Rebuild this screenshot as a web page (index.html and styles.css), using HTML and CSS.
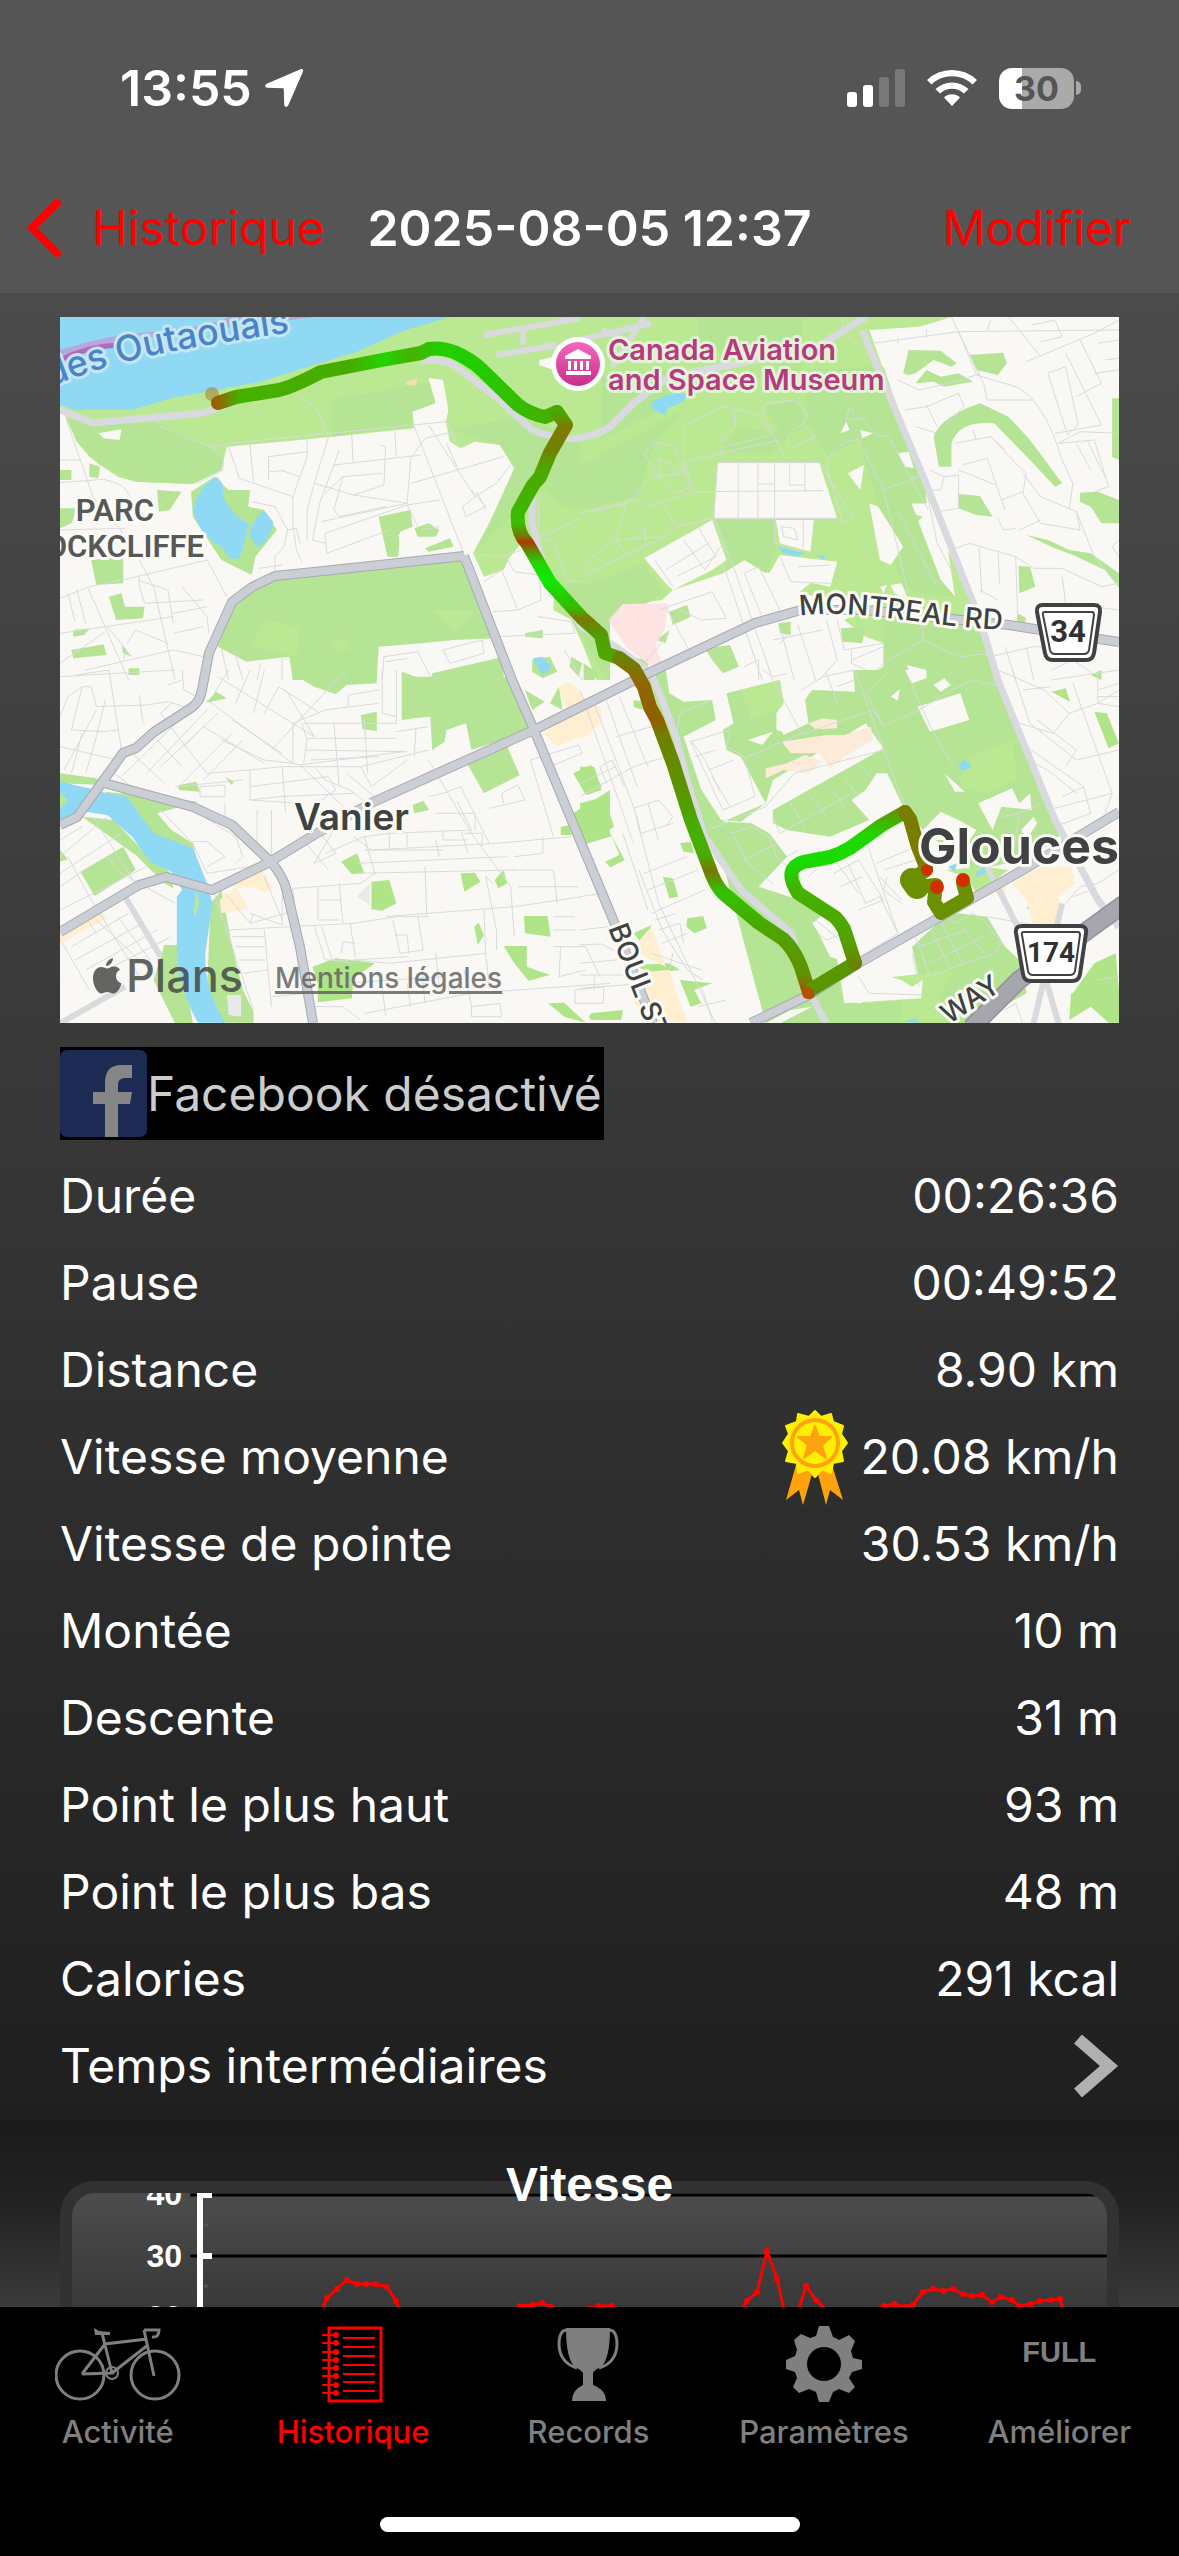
FILE: index.html
```html
<!DOCTYPE html>
<html lang="fr">
<head>
<meta charset="utf-8">
<meta name="viewport" content="width=device-width, initial-scale=1">
<title>Historique</title>
<link rel="stylesheet" href="styles.css">
</head>
<body>
<header class="top">
  <div class="status">
    <div class="status-left">
      <span class="clock">13:55</span>
      <svg width="40" height="40" viewBox="0 0 40 40" aria-hidden="true"><path fill="#fff" d="M36.500 1.200C38.500.4 39.700 1.800 38.900 3.700L24.300 37.300C23.300 39.500 20.300 39.200 20.200 36.700L19.800 21.300C19.800 20.600 19.400 20.200 18.700 20.200L3.300 19.800C.8 19.700.5 16.800 2.700 15.800Z"/></svg>
    </div>
    <div class="status-right">
      <svg width="58" height="38" viewBox="0 0 58 38" aria-hidden="true"><g fill="#fff"><rect y="23" width="10" height="15" rx="3"/><rect x="16" y="16" width="10" height="22" rx="3"/></g><g fill="#787878"><rect x="32" y="8" width="10" height="30" rx="3"/><rect x="48" width="10" height="38" rx="3"/></g></svg>
      <svg class="wifi" width="50" height="38" viewBox="0 0 50 38" aria-hidden="true"><path fill="#fff" d="M25 37L33 28.500A11.500 11.500 0 0 0 17 28.500ZM37 24.500A17.500 17.500 0 0 0 13 24.500L8.500 20A24 24 0 0 1 41.500 20ZM45.500 15.500A29.500 29.500 0 0 0 4.500 15.500L0 11A36 36 0 0 1 50 11Z"/></svg>
      <div class="battery"><div class="cell">30</div><div class="nub"></div></div>
    </div>
  </div>
  <nav class="nav">
    <a class="back" href="#historique"><svg width="36" height="60" viewBox="0 0 36 60" aria-hidden="true"><path d="M31 5L6 30L31 55" fill="none" stroke="#f00" stroke-width="8" stroke-linecap="round" stroke-linejoin="round"/></svg>Historique</a>
    <h1>2025-08-05 12:37</h1>
    <button class="edit" type="button">Modifier</button>
  </nav>
</header>

<main class="page">
  <div class="details">
  <div class="map">
    <svg class="map-art" viewBox="0 0 1059 706" role="img" aria-label="Parcours">
      <defs>
        <linearGradient id="r1" gradientUnits="userSpaceOnUse" x1="158" y1="0" x2="506" y2="0"><stop offset="0" stop-color="#966300"/><stop offset=".06" stop-color="#45b000"/><stop offset=".38" stop-color="#48ac00"/><stop offset=".48" stop-color="#22d400"/><stop offset=".56" stop-color="#48b000"/><stop offset=".63" stop-color="#25cc00"/><stop offset=".75" stop-color="#22cc00"/><stop offset="1" stop-color="#4fa800"/></linearGradient>
        <linearGradient id="r2" gradientUnits="userSpaceOnUse" x1="0" y1="95" x2="0" y2="341"><stop offset="0" stop-color="#48a800"/><stop offset=".06" stop-color="#7d7a00"/><stop offset=".16" stop-color="#708200"/><stop offset=".22" stop-color="#50a400"/><stop offset=".45" stop-color="#38be00"/><stop offset=".5" stop-color="#708000"/><stop offset=".53" stop-color="#ad3a00"/><stop offset=".56" stop-color="#688000"/><stop offset=".61" stop-color="#28d000"/><stop offset=".68" stop-color="#0dec00"/><stop offset=".8" stop-color="#38b800"/><stop offset=".84" stop-color="#7a7800"/><stop offset=".91" stop-color="#4f9f00"/><stop offset="1" stop-color="#4fa800"/></linearGradient>
        <linearGradient id="r3" gradientUnits="userSpaceOnUse" x1="0" y1="340" x2="0" y2="675"><stop offset="0" stop-color="#6a8400"/><stop offset=".07" stop-color="#8f6800"/><stop offset=".19" stop-color="#8f6000"/><stop offset=".24" stop-color="#708000"/><stop offset=".4" stop-color="#5a9500"/><stop offset=".52" stop-color="#45b000"/><stop offset=".59" stop-color="#4aac00"/><stop offset=".64" stop-color="#787800"/><stop offset=".7" stop-color="#30c400"/><stop offset=".8" stop-color="#4aa800"/><stop offset=".95" stop-color="#629000"/><stop offset="1" stop-color="#a85000"/></linearGradient>
        <linearGradient id="r4" gradientUnits="userSpaceOnUse" x1="0" y1="650" x2="0" y2="495"><stop offset="0" stop-color="#6f7d00"/><stop offset=".15" stop-color="#55a000"/><stop offset=".5" stop-color="#42b400"/><stop offset=".68" stop-color="#18dc00"/><stop offset=".85" stop-color="#22d600"/><stop offset="1" stop-color="#5a9800"/></linearGradient>
        <linearGradient id="pin" x1="0" y1="0" x2="0" y2="1"><stop offset="0" stop-color="#f566bd"/><stop offset="1" stop-color="#c92d8b"/></linearGradient>
        <path id="river-line" d="M-10 70C70 38 130 30 260 11"/>
        <path id="montreal-line" d="M740 299C800 290 870 312 970 314"/>
        <path id="boul-line" d="M548 611L608 765"/>
        <path id="way-line" d="M790 772L942 673"/>
      </defs>
      <rect width="1059" height="706" fill="#f9f8f4"/>

      <!-- north-west -->
      <g class="area" transform="translate(-10 -7) scale(.357143 .333333)">
        <path class="lime" d="M28 280L1110 21H1568V1110H1530L1490 1000L1460 930L1410 900V840L1345 740L1320 700L1285 745L1270 780L1215 800L1185 730L1230 640L1260 580L1300 475L1260 405L1190 395L1150 415L1120 395L1108 335L1115 300L1100 210L1060 205L1080 270L1055 295L1015 305L1020 355L700 390L495 410L480 480L400 522L240 515L190 500L140 465L110 440L75 395L45 325L28 290Z"/>
        <path class="leaf" d="M50 330L300 335L450 412L485 445L480 480L400 522L240 515L140 465L75 395ZM790 270L1060 215L1080 280L1015 305L1020 350L790 380ZM1310 320L1568 420V590L1440 590L1380 540L1300 610L1185 730L1230 640L1300 475L1260 405L1120 360ZM1400 840L1568 790V1110L1530 1060L1460 930Z"/>
        <path class="leaf" d="M470 1010L515 880L565 830L640 797L1160 745L1200 860L1250 985L1130 990L1040 1000L920 1010L915 1110H680L670 1040L550 1055ZM115 750L205 740V820L130 825ZM165 860L200 850L210 890L265 890L260 925L185 930ZM65 960L112 955L95 975L65 980ZM60 1020L150 1003L158 1035L65 1045ZM300 540L368 545L335 600L305 605ZM28 595L75 595L60 640L28 655ZM28 480H60V510H28ZM110 460L140 470L135 505L110 500ZM920 620L1010 600L1015 650L980 665L975 740H945ZM1020 655L1060 640L1090 660L1080 680H1030ZM1050 715L1120 685L1130 710L1060 725ZM395 545L460 500L500 540L560 540L555 590L600 600L635 660L575 740L565 795L480 750L400 620ZM1350 1050L1400 1040L1420 1085L1380 1105L1350 1085ZM1330 970L1380 960V985L1330 980ZM1460 1040L1490 1060L1480 1100L1455 1070ZM200 1005L230 1040L205 1030ZM220 1075H250V1095H220ZM985 1085L1050 1110H985ZM1070 1090L1270 1040V1110H1070Z"/>
        <path class="lime" d="M600 930L700 950L690 1040L560 1010ZM790 990L835 985V1022L795 1022ZM1070 900L1190 900L1130 965Z"/>
        <path class="water" d="M28 21H1120L990 62L860 125L700 178L590 215L440 245L340 265L230 300L70 300L28 285ZM400 600Q415 530 465 500Q490 515 485 560Q510 620 558 640Q545 700 530 745Q500 755 485 715Q420 680 400 600ZM558 680Q570 620 600 602L625 635Q620 680 585 712ZM1352 1045L1380 1040L1405 1070L1380 1097Z"/>
        <path fill="#b7a8da" d="M28 120Q150 75 290 65T500 21H700L740 21L330 75Q150 95 28 160Z"/><path d="M30 150Q100 110 190 105" fill="none" stroke="#b06ac0" stroke-width="5"/>
        <path fill="#f9f8f4" d="M135 370L200 358L195 390L150 385ZM975 675L1010 655L1020 715L985 725ZM1370 150L1410 140V180L1370 165ZM1060 205L1100 210L1115 300L1108 335L1020 355L1015 305L1080 280Z"/>
        <path fill="#dbe7f5" d="M1495 240L1540 230L1545 260L1510 298L1490 270Z"/><path fill="#f0ddb0" d="M995 215L1030 205L1025 225L1000 228Z"/>
        <path class="lane wide" d="M1215 75L1510 20M1250 135L1420 105M1325 50V105"/>
        <path class="lane" d="M28 450H85M45 325L120 560L220 690L290 830L350 1110M28 518L150 508Q210 520 225 560M690 250L750 300L780 380L740 520L720 600V690M300 330L310 350L450 412L485 445V480L410 522M450 412L500 400L1110 335L1140 400M500 410L530 505L680 560M560 405L570 515M612 510V440L720 425M720 390V440L680 560V640L690 720L705 755M615 485L650 482L700 500M845 375L848 455M965 362L970 440M795 465L1040 435M740 520L850 555L935 525L940 410L925 405M770 550L820 500L930 490M810 420L755 580L735 690L770 700M850 555L1000 580L760 635M1000 580L1010 445L1050 385L1130 365M1020 350L1160 735M1060 345L1190 560L1250 520L1290 465M1010 520L1270 440M1000 585L1090 570M820 500L795 600L810 620L940 590M770 670L1000 585L1030 650M770 670L775 730L950 660M665 660L690 655L700 700M565 575L630 590L665 660L655 710L630 740V785M585 775L650 765M1190 560L1155 590L1165 620L1220 590L1180 540M1110 400L1140 470M1195 545L1220 595M1040 660L1090 650M1185 735L1270 738L1320 720M1280 745L1300 785L1370 795L1375 870L1310 900L1265 780L1215 815M1240 905L1310 900M1365 530L1370 680L1568 590M1370 680L1410 700L1450 810L1500 820L1568 750M28 660L210 655M205 810L440 750L495 860M28 865L110 830L200 810M50 850L70 935M75 840L100 940M105 830L150 940L220 1110M250 795V830L265 880L430 870M245 810L330 840L345 940M28 970L345 920M345 910L440 890M370 830L385 850L440 920L445 970M160 950L215 1020L205 1050M215 1000L240 960L330 1000M155 965L28 1060M345 970L430 950M100 1080L345 1020L430 1040M28 1100L350 1080M515 1020L540 1110M480 1015L500 1110M590 1060L580 1110M650 1040V1110M930 1110L935 1040L1030 1025L1070 1110M940 1055L1000 1045M1100 1020L1210 990L1215 1030L1120 1060ZM1365 920L1460 935L1470 970L1250 980M1440 1020L1490 1110"/>
      </g>

      <!-- north-east -->
      <g class="area" transform="translate(520 -7) scale(.357143 .333333)">
        <path class="lime" d="M0 21H1040L950 50L810 60L850 180L900 330L965 500L970 580L930 580L880 545L900 600L960 620L920 660L960 750L1010 810L1050 860L1030 720L1110 890L1130 960L1150 1030L1170 1110H790L850 1070L850 1000L800 980L740 930L850 870H720L610 850L650 815L700 830L720 755L560 735L530 790L460 750L400 790L260 840L230 870L100 890L80 940L0 880Z"/>
        <path class="leaf" d="M0 470L150 380L290 300L210 400L160 560L0 600ZM60 190L300 180L240 290L60 390ZM330 21H620V190L330 100ZM620 180L850 170L900 330L965 500L970 580L930 580L850 540L780 390L690 440L640 340L530 430L400 420L440 350L560 370L520 290L600 270L640 330ZM380 630H540L550 715L520 790L460 750L400 790L420 750ZM0 830L180 760L240 850L80 940L0 880ZM780 390L860 390L1010 810L1050 860L960 850L900 830ZM850 930L1120 950L1170 1110H790L850 1070Z"/>
        <path class="leaf" d="M905 190L920 120L1010 122L1055 160L1040 170L990 150L940 190L920 195ZM940 220L970 180L1010 200L1060 190L1100 215L1020 230L990 215ZM1090 135L1185 128L1195 160L1170 195L1110 180ZM990 380Q1010 320 1120 280L1200 320L1260 390L1350 520L1330 530L1260 450L1160 340Q1060 330 1040 400V470H1005ZM1058 552L1120 558L1155 620L1110 615L1060 595ZM1490 265H1509V450L1490 440ZM1400 548L1450 545L1509 570V640L1460 640L1430 590L1400 575ZM1250 675L1310 690L1370 720L1430 730L1509 790V835L1470 780L1380 735L1320 710ZM1228 768L1260 770L1275 830L1230 850ZM1225 910L1250 925L1245 940H1222ZM250 905L300 885L310 920L260 945ZM215 990L250 960L240 1000ZM555 940L590 935V975L560 970ZM730 955L800 950L790 1000L735 995ZM350 1015L420 1005L445 1070L400 1090L370 1050ZM140 1040L190 1050V1085L150 1080ZM600 770H640V800H600ZM10 1060L50 1090L40 1110H10Z"/>
        <path fill="#f9f8f4" d="M385 458H670L720 625H375ZM180 745L370 630L410 750L370 780L260 840L240 820ZM548 630H655L645 725L560 700ZM810 580L835 590L905 710L870 765L840 750ZM750 490L795 465L785 540ZM730 370L745 335L755 360ZM785 360L820 370L790 385ZM890 430L920 425L935 475L910 470ZM840 830L860 825L850 850ZM870 825L900 820L920 870L880 850ZM560 740L720 755L700 830L610 810ZM915 1065L970 1080L960 1110H930Z"/>
        <path fill="#fde3e1" d="M80 930L120 882L245 880L240 950L210 1010L230 1060L200 1070L130 1010Z"/>
        <path class="water" d="M200 280Q230 250 300 250L290 275L245 295L240 315L205 300ZM555 710L630 730L610 740L570 730ZM655 732L692 740L680 748Z"/>
        <path class="lane wide" d="M0 90L200 40M90 170L180 21M60 60L130 90"/>
        <path class="lane" d="M730 21Q740 90 790 105H820M375 625L385 458H670L765 620L735 635L690 470Q700 400 780 388M443 460V625M498 460V625M545 460V625M587 460V525H630M630 460V545M498 522H545M325 545L680 542M375 625H720M375 625L430 770L540 1110M290 455L320 545L200 590L150 570L0 610M290 455V350L400 290L470 305L500 320L535 375L390 415L400 440M430 300L435 350L390 395M510 310L570 440M510 310L520 280L600 270L635 310L625 345Q580 360 580 400L590 415L660 378L625 345M180 430L210 395L265 410L310 530L270 550L225 510L180 430M290 455L560 390M0 800L240 680L100 690L0 770M240 680L270 650L375 625M35 605L130 580L100 690L135 740M130 580L200 500L300 490L220 445L225 510M235 590L270 650M180 650L185 710M745 330L755 290L770 310M745 330L790 325L830 375L865 380L975 600M780 390L850 540L920 850M850 540L970 490M890 600L960 750L1000 830M240 780L360 700M210 750L260 830M270 800L380 740M290 690L350 780L400 700M330 650L380 740M545 630V700L620 720M565 650L600 655L610 690L570 680ZM625 630V715M820 100L1060 65L1509 60M890 85V105M970 60V85M1040 21L1130 220L1140 270L1270 270M1140 60L1150 30M1060 65L1110 195L1220 230Q1300 270 1350 450M1200 21L1290 140M1250 155L1440 70L1509 30M1265 45L1330 30L1350 80L1290 95M1310 190L1360 170L1395 345L1365 375ZM1400 90L1460 220L1390 260M1360 130L1460 345L1330 370M1450 100L1509 90M1470 150L1509 145M1440 190L1509 180M890 210L950 240L1070 210L1120 190M910 300L970 290L1060 250L1075 290L1020 350M970 285L1000 350M940 350L1000 370M1050 400L1150 380L1220 460L1250 490L1240 550L1290 640L1400 660M1100 360L1110 390M1150 380L1190 420M1070 465L1140 445L1190 600M1060 480L1165 525M980 480L1020 500L1010 540L970 540L1000 700L1050 800M1020 500L1060 495L1060 595L1000 605M1170 625L1185 660L1220 655M1240 490L1290 560L1390 605L1440 740L1509 830M1180 570L1240 545M1390 605L1400 660M1340 400L1440 390L1480 530L1440 545M1390 400L1430 480M1420 390L1470 500M1350 450L1380 520L1370 600M1340 400L1400 365L1509 370M1230 660L1290 630M1040 720L1090 700L1220 740L1270 775L1350 775L1460 830L1509 820M1118 715L1125 850M1170 720L1175 820M1220 740L1225 910M1120 840L1170 870M1350 800L1360 880L1509 900M1060 770L1090 840L1090 900M1509 690L1490 710L1509 740M400 760L510 1110M460 790L500 770L560 900M460 790L510 920M560 740L590 815L700 820M610 770L700 765M370 845L410 925L340 930L280 900M370 845L220 900M240 890L310 1030M610 945L660 1110M560 950L600 1110M690 930L720 1050L670 1110M540 990L680 960M560 1000L580 980M720 930L740 1020L850 1000M760 1050L850 1010M760 1020V1060L800 1080M960 850V990L1060 1040L1150 1030M960 990L850 1060L800 1110M460 1070L500 1050L500 1110M1190 1010L1220 1110M1250 1010L1270 1110M1150 1040L1270 1010L1450 1020M1320 1080L1380 1050L1450 1100M250 970L180 1060"/>
      </g>

      <!-- south-west -->
      <g class="area" transform="translate(-10 353) scale(.357143 .333333)">
        <path class="leaf" d="M680 0H915V40L830 45L800 73L740 50L700 25L680 30ZM985 20H1280L1350 180L1180 240L1165 160L1110 180L1105 215L1070 240L1065 140L1020 145L985 150ZM1170 285L1280 230L1315 315L1215 370ZM440 95L465 65L495 85L440 98ZM870 135L915 125L915 183L875 178ZM28 310L130 325L150 345L28 340ZM155 365L320 385L415 395L300 430L340 480L400 520L410 560L300 500ZM360 345L410 335L420 365L360 360ZM490 320L515 335L508 345ZM90 440L180 450L270 555L340 610L345 655L320 640L240 555ZM85 605L205 530L240 600L125 678ZM28 540L50 568L28 575ZM1015 405L1045 392L1062 420L1020 430ZM320 825H360L400 1060H350L290 930ZM450 700L480 660L510 830L540 960L570 1025V1058H480L440 950ZM1330 60L1385 95L1350 120ZM1400 100L1425 50L1435 120Z"/>
        <path class="green" d="M815 575L860 550L880 610L845 612ZM900 635L950 630L970 700L930 722L900 718ZM1150 610L1190 608L1205 635L1160 665ZM1245 630L1270 600L1280 640L1255 655ZM1327 738H1393L1402 800L1330 790ZM1270 828H1335V890L1400 915L1340 932L1300 880ZM1188 770L1200 758L1215 795L1198 825ZM1465 310L1515 285L1545 350L1500 375ZM1465 430L1568 360V500L1500 522ZM1430 470L1455 465L1460 495L1430 495ZM735 890L800 865L910 880L850 925L845 985L750 997L750 940ZM1395 1000L1440 998L1500 1058L1440 1040ZM1510 1035L1568 1025V1050L1510 1045Z"/>
        <path class="water" d="M28 335L110 355L160 370L215 380L290 490L400 535L440 640L455 700L435 850Q430 950 490 1058H415Q370 980 355 860V680L370 660L340 605L280 575L230 500L160 435L100 425L28 450Z"/>
        <path class="lime" d="M28 370L50 390L28 415ZM402 735L410 660L418 700L408 735Z"/>
        <path class="sand" d="M475 690L520 650L555 715L480 730ZM480 635L580 575L625 655L600 665L560 650L530 655ZM28 790L150 730L160 745L28 820ZM1425 50Q1450 30 1470 50L1500 95L1540 110Q1560 160 1500 190L1420 230L1380 190L1450 130Z"/>
        <path fill="#e8e9e8" d="M860 680L895 640V705ZM495 975H535V1040L500 1035Z"/>
        <path class="lane wide" d="M210 680L310 860M28 1060L210 950"/>
        <path class="lane" d="M28 140L50 80L90 50L115 50L130 110L270 105L330 95L390 115M90 50L60 180L150 185L190 180M165 0L200 240M75 15L165 0M130 120L40 300M90 190L60 310M28 230L190 270M155 90L130 200L100 310M250 75L260 160M370 0L375 60L430 90M330 45L370 30M340 100L310 130L380 230L440 310M230 250L320 340M440 120L270 310M400 110L200 320M470 130L310 290M510 190L370 340M540 210L430 330M180 310L240 360M375 230L430 170L600 280M300 210L370 290M440 90L680 280M470 20L740 200L660 60M500 0L460 70M560 0L520 100M600 0L570 130M640 50L600 130M820 10L620 240M820 10L830 25M510 150L650 250M480 210L600 270L680 280L700 285L990 245M680 280V160L770 120L920 100M640 50L750 125M710 160L970 160M720 205H970M715 240L1000 245M730 270L920 260M795 160L810 350M880 150L890 310M705 160L720 210L710 280M970 160V0M930 0V130L970 140M970 185L1060 170M835 75L920 60M835 110V75M1025 170L1020 260M440 310L560 300L650 290L870 290L1060 240M560 300V390L700 400M560 350L780 320M650 290L660 430M560 390L640 380L850 370M700 285L850 440M740 290L770 330L840 360L900 410M780 320L800 360L760 390M830 310L920 390M870 290L900 350L1000 270M800 470L740 580M350 350L540 330M420 350L490 345V380H420ZM300 410L400 520L440 610L560 590M400 515H440L490 560L440 590M430 440L520 500L540 560L520 580M490 400V440L620 570M580 420V550M620 420V570M750 480L800 550L740 580M700 500L780 600M770 550L880 500L950 490L1180 480M880 500L910 610L870 640L680 655L700 860M850 500L900 540L1250 520L1460 500M860 580L1280 560M860 610L1300 600M880 540H1100M950 490V540M1000 490V530M1100 480V510H1170M1080 510L1090 560M1150 480L1170 550M1160 490H1210V530M1050 590L1055 740M940 740L1300 710L1490 680M750 655V750H810M755 690H815M810 640L820 760M500 780L850 760L970 740L1060 740M740 770L770 870H840M760 770L790 870L850 880M840 760L855 860M815 850L820 815L855 820M960 750L980 850L1045 840L1030 740M965 795H1000L1005 850M1000 860L850 870L950 880L1220 850M1160 900L1180 1010M1080 850L1090 950M1060 270L1180 490L1290 650L1300 800M1100 370L1150 350L1230 520M1140 395L1180 480M1060 380L1100 370M1230 415L1330 390L1310 345L1265 370L1270 400M1345 270L1480 225L1490 250L1400 290M1345 270L1410 500M1080 430H1190V480M1290 600H1410M1310 650H1480M1410 600L1420 700M1300 560L1380 550V500M1240 640L1220 620L1250 780V840M1215 720L1220 850L1230 950M1410 740H1470M1410 780H1470M1410 830H1500L1540 920M1430 830L1425 920L1500 900M1470 960L1550 950V1000H1470ZM560 730L650 765V670M460 670L510 830L570 1020M490 670L560 760L690 720M600 620L650 750M570 730L560 760M510 800H600M520 830H600M530 870H605M540 910L610 900M600 780L620 1010M620 980L720 970M28 510L90 470M28 560L160 440M28 610L200 490M50 560L110 680L250 920M28 650L110 590M120 440L250 660M160 560L200 610L350 700M28 720L270 590M100 740L130 790M130 750L300 920M60 830L220 730M70 870L260 760M100 900L300 780M140 910L340 800M190 740L280 870M30 810L110 960M880 1030L1180 970L1568 940M820 940L1100 920M930 950L940 1040M1000 940L1010 1010M1040 890L1050 1000M1180 1010L1260 1000L1265 1040H1180ZM740 1010H820L870 1050"/>
      </g>

      <!-- south-east -->
      <g class="area" transform="translate(520 353) scale(.357143 .333333)">
        <path class="leaf" d="M180 0H240L250 70L290 95L370 90L380 150L290 200L340 360L395 450L450 455L520 400L450 260L410 240L400 180L430 160L410 70L560 30L570 100L550 130V180L580 190L640 160L630 90L650 60L770 65L765 0H1160L1350 490L1320 520L1250 570L1100 600L960 480L900 400L860 310L830 310L800 360L760 390L810 450L700 500L580 480L540 460L540 420L850 235L800 160L540 330L520 400L400 455L480 460L530 490L580 560L500 650L700 720L650 760L720 870L740 990L780 1000L960 985L930 830L1020 740L1060 730L1140 740L1190 830L1240 880L1250 970L1100 1060H560L650 1010L590 1020L520 1060L400 580L270 330L210 130Z"/>
        <path class="lime" d="M1090 260L1210 210L1225 330L1140 370L1060 350ZM450 60L560 30L565 110L480 150ZM800 930L1050 900L1000 990L1100 1000L1050 1060H900V990L790 1000Z"/>
        <path class="green" d="M0 290H40L60 360L20 375L0 340ZM0 400L70 380L95 470L30 515L0 500ZM70 575L110 555L90 500L60 490L80 480L125 570L85 592ZM232 620L260 625L275 680L250 685ZM300 745L345 738L355 775L320 790L298 770ZM150 790L200 765L180 830ZM280 520L310 515L320 550L290 545ZM1440 125L1475 130L1509 220L1480 235ZM1320 65L1360 55L1372 95ZM1430 15L1460 0V30ZM30 1030L120 1020L115 1050H30ZM150 885L250 880L280 900L200 910ZM280 930L370 940L320 960L340 1000L310 1010ZM1375 970L1509 960V1058H1480L1430 1010L1370 1050ZM1440 880L1500 850L1509 960L1380 970ZM1260 690L1300 680L1250 720ZM150 90L175 95V120L150 110Z"/>
        <path fill="#f9f8f4" d="M945 110L1065 70L1090 150L980 185ZM870 80L895 58L890 92ZM990 45L1020 25L1038 45L1010 65ZM910 0H970V25L930 40ZM1115 400L1210 355L1230 400L1260 370L1265 420L1180 410L1155 480ZM1020 310L1078 365H1050ZM470 210L540 185L510 225ZM960 480L1010 425L1060 450L1110 480L1060 560ZM1235 480L1270 440L1280 460L1250 510ZM550 135L590 125L640 155L570 195ZM655 760L690 720L750 850L760 880L700 860ZM730 930L830 910L900 930L930 950L960 930L955 985L740 1000Z"/>
        <path class="lime" d="M1000 510L1040 510L1010 560ZM1025 600L1130 590L1200 600L1110 670L1080 620L1050 610Z"/>
        <path fill="#fbebd8" d="M565 215L690 195L740 195L815 170L820 210L740 260L700 295L670 250L590 250ZM640 160L680 145L720 150V175L660 178ZM520 295L580 280L630 255L680 275L640 310L570 300L520 325Z"/>
        <path class="sand" d="M0 70L50 120L60 160L0 210ZM1210 640L1290 590L1375 590L1385 640L1340 680V765L1270 765L1250 690ZM150 830L200 770L240 890L200 870L160 850ZM150 1000L190 905L250 900L280 1000L300 1055H210ZM1140 665L1190 640V675Z"/>
        <path class="water" d="M1058 290L1075 268L1098 290L1075 302ZM1110 605L1130 592L1140 605L1110 622ZM1030 590L1055 580L1050 605ZM900 1055L940 1045L950 1058Z"/>
        <path class="lane wide" d="M1140 590L1310 950L1340 1060M1270 1060L1350 700"/>
        <path class="lane" d="M40 100L150 410L220 700L380 1060M70 80L160 350M110 80L190 290M0 60L150 520M0 380L150 290L240 260M0 340L100 290M55 290L90 270L125 350M55 290L75 340M100 200L200 170M150 415L220 390L260 440L240 470M160 440L170 490M190 400L220 510M170 490L260 460M180 610L300 560M190 660L330 600M200 730L350 660M165 600L230 780L300 900L345 930M120 490L190 720M0 680L60 670M0 780L80 770M0 825L60 822L160 880M0 880L150 865M0 915H160M0 955L180 940M40 915V960M210 750L270 730M230 820L300 790M220 780L280 760L290 820M200 850L340 900M260 850L250 900M310 215L420 180L410 230L460 260L490 380L400 420L310 215M320 260L380 240M360 300L430 270M370 320L420 410M310 210L350 270L390 360M460 265L600 200L820 120L850 170L950 120L1040 60L1100 30L1180 50M270 200L280 130L370 90M510 0L540 20L580 10M540 30L620 190M620 60L680 20L770 0M720 50L770 30M690 10L720 100M770 0L850 240L910 410M800 70L870 0M800 70L850 170M910 0L990 190L1040 280M360 480L520 410L600 310L850 240M540 440L560 490L760 370M590 400L630 470M640 370L690 440M740 320L780 380M700 350L740 410M790 290L820 330M420 490L480 470L530 500L550 560L590 600M430 500L470 580L540 640M460 570L550 520M640 620L670 590L720 580L780 670M710 610L780 570L850 690L780 720M750 580L800 700M730 650L790 620M800 510L890 790M830 580L920 540M850 600L940 570M840 620L900 690M670 540L660 590M580 560L610 540M860 620L850 660L900 700M800 700L840 680L890 790L740 890M660 750L750 830V870M665 790L690 810L740 790M940 800L980 920L1050 890L1160 850L1180 820L1130 750L1100 730L1050 760L1020 740M980 770L1040 900M1010 750L1070 880M950 830L1080 780M980 880L1130 800M1070 770L1130 850M780 920L810 970L960 975M930 850L950 950M1210 0L1260 160L1390 270L1509 240M1170 0L1300 60L1370 130L1450 100L1509 110M1240 60L1320 50M1370 130L1325 190L1230 160M1280 150L1390 240L1360 290M1320 30L1509 0M1450 0V100L1509 60M1450 60L1509 40M1450 80H1509M1380 40L1490 370M1250 230L1410 350L1430 430L1330 470M1250 270L1310 300L1390 370M1350 380L1410 350M1310 420L1490 370L1470 430M1180 440L1230 430L1290 400M1230 430L1210 560M1360 700L1400 650L1450 640L1509 600M1380 680L1430 660M1140 740L1270 765M1190 1020L1220 1000L1240 1060M1450 930L1509 920M330 1010L410 990M340 950L370 1050"/>
      </g>

      <!-- arteries -->
      <g class="parkway">
        <path d="M0 93L33 106L144 96L166 88M361 44Q380 41 394 48L436 80L472 113Q500 124 519 121T550 110L575 85L609 60L681 46L752 33L806 0M472 173V206L486 260L522 310L556 330L591 356L605 390L616 420L627 463L645 520L681 573L731 616L752 680L766 706M802 13L866 166L920 303L938 363L995 503L1038 583L1059 610"/>
      </g>
      <g class="casing"><use href="#artery"/></g>
      <g class="artery"><path id="artery" d="M404 239L254 255L215 259L192 270L172 285L149 336L142 373Q140 385 131 391L94 415L76 431L63 436L51 453L17 500L0 508M404 239L452 363L474 413L552 600L593 706M0 615L79 568L106 560L152 573L208 546L254 518L311 486L474 413L591 355L695 306L741 293H806L949 308L1059 325M44 466L133 490L172 508L211 545Q224 560 227 575L240 630L253 706M691 706L749 678L799 646L963 553L1059 495"/></g>
      <path d="M911 711L959 663L1064 587" fill="none" stroke="#92939a" stroke-width="19"/><path d="M911 711L959 663L1064 587" fill="none" stroke="#a6a6ae" stroke-width="16"/>

      <!-- ride, tinted by speed -->
      <circle cx="152" cy="77" r="7" fill="#a98433" opacity=".6"/>
      <g class="ride">
        <path stroke="url(#r1)" d="M158 86L176 80L219 73Q232 70 261 55L322 43L361 36L369 32Q380 30 394 35Q412 43 422 53L458 88Q470 97 485 100L497 95"/>
        <path stroke="url(#r2)" d="M497 95L506 108L490 136L480 160L473 168L458 195Q456 215 467 226L490 266L522 301L541 318L545 336L559 341"/>
        <path stroke="url(#r3)" d="M559 341L574 352L584 370L590 390L597 403L613 446L631 503L649 550Q655 568 663 576L699 606L723 622Q734 632 741 650L749 675"/>
        <path stroke="#599700" d="M752 672L795 646"/>
        <path stroke="url(#r4)" d="M795 646L784 612Q780 605 775 600L738 576Q728 560 733 552Q738 545 749 544L770 540Q780 537 790 531L822 508L845 495"/>
        <path stroke="#787d00" d="M845 495L850 502L858 530L866 550"/>
        <path stroke="#6a8f00" stroke-width="24" d="M852 563L857 570"/>
        <path stroke="#6a8f00" d="M866 553L852 562M858 570L876 568L874 585L881 596L907 581L903 566"/>
      </g>
      <g fill="#d02f00"><circle cx="867" cy="553" r="6"/><circle cx="877" cy="570" r="7"/><circle cx="903" cy="563" r="7"/><circle cx="748" cy="676" r="6" fill="#b35200"/></g>

      <!-- places -->
      <g class="label">
        <text class="river"><textPath href="#river-line">des Outaouais</textPath></text>
        <text class="museum" x="548" y="43">Canada Aviation</text>
        <text class="museum" x="548" y="73">and Space Museum</text>
        <text class="park" x="94" y="204" text-anchor="end">PARC</text>
        <text class="park" x="144" y="240" text-anchor="end">ROCKCLIFFE</text>
        <text class="town" x="234" y="513">Vanier</text>
        <text class="city" x="859" y="547">Gloucester</text>
        <text class="street"><textPath href="#montreal-line">MONTREAL RD</textPath></text>
        <text class="street"><textPath href="#boul-line">BOUL ST</textPath></text>
        <text class="street"><textPath href="#way-line" startOffset="100%" text-anchor="end">WAY</textPath></text>
      </g>
      <circle cx="518" cy="47" r="27" fill="#fff"/><circle cx="518" cy="47" r="22" fill="url(#pin)"/>
      <path fill="#fff" d="M518 32L531 39V42H505V39ZM508 44H511V53H508ZM514 44H517V53H514ZM520 44H523V53H520ZM526 44H529V53H526ZM506 54H531V58H506Z"/>
      <g class="shield">
        <path d="M983 288H1034Q1041 288 1040 295L1034 336Q1033 343 1026 343H993Q986 343 985 336L977 295Q976 288 983 288Z"/>
        <path class="inner" d="M985 295H1032Q1034 295 1034 298L1029 333Q1028 337 1024 337H995Q991 337 990 333L983 298Q982 295 985 295Z"/>
        <path d="M962 609H1020Q1027 609 1026 616L1020 657Q1019 664 1012 664H971Q964 664 963 657L956 616Q955 609 962 609Z"/>
        <path class="inner" d="M964 615H1018Q1020 615 1020 618L1015 654Q1014 658 1010 658H973Q969 658 968 654L962 618Q961 615 964 615Z"/>
        <text x="1008" y="325">34</text><text class="narrow" x="991" y="645">174</text>
      </g>
    </svg>
    <div class="map-credit">
      <span class="brand"><svg width="30" height="38" viewBox="0 0 30 38" aria-hidden="true"><path fill="#3f403e" d="M21 1C21 5 18 9 14 9C14 5 17 2 21 1ZM15.500 11.500C17 11.500 19 9.500 22 9.500C25 9.500 27 11 28 12.500C22 16 23 24 29.500 26.500C28 31 25 36.500 21.500 36.500C19 36.500 18.500 35 15.500 35C12.500 35 11.500 36.500 9.500 36.500C5.500 36.500 1 28.500 1 21.500C1 14 5 10 9 10C12 10 14 11.500 15.500 11.500Z"/></svg>Plans</span>
      <a class="legal" href="#mentions">Mentions légales</a>
    </div>
  </div>

  <button class="facebook" type="button" disabled>
    <svg width="87" height="87" viewBox="0 0 87 87" aria-hidden="true"><rect width="87" height="87" rx="7" fill="#1d2b54"/><path fill="#868686" d="M45 87V54H33V42H45V33Q45 15 61 15H72V28H65Q58 28 58 35V42H72L70 54H58V87Z"/></svg>
    <span>Facebook désactivé</span>
  </button>

  <dl class="stats">
    <div class="row"><dt>Durée</dt><dd>00:26:36</dd></div>
    <div class="row"><dt>Pause</dt><dd>00:49:52</dd></div>
    <div class="row"><dt>Distance</dt><dd>8.90 km</dd></div>
    <div class="row"><dt>Vitesse moyenne</dt><dd><svg width="68" height="96" viewBox="0 0 68 96" aria-hidden="true"><path fill="#fea30d" d="M15 56L5 91L18 81L22 96L31 65L37 65L45 96L49 81L62 91L51 56Z"/><path fill="#ffee05" stroke="#ffee05" stroke-width="2" stroke-linejoin="round" d="M34 2L40 8L50 5L52 13L62 17L60 25L66 34L60 42L62 52L52 54L50 64L41 60L34 68L27 60L17 64L16 54L5 52L8 42L2 34L8 25L5 17L16 13L17 5L28 8Z"/><circle cx="34" cy="34" r="23" fill="none" stroke="#fea30d" stroke-width="4"/><path fill="#fea30d" stroke="#fea30d" stroke-width="2" stroke-linejoin="round" d="M34 17L38 28L50 28L41 36L45 49L34 41L23 49L27 36L17 28L30 28Z"/></svg>20.08 km/h</dd></div>
    <div class="row"><dt>Vitesse de pointe</dt><dd>30.53 km/h</dd></div>
    <div class="row"><dt>Montée</dt><dd>10 m</dd></div>
    <div class="row"><dt>Descente</dt><dd>31 m</dd></div>
    <div class="row"><dt>Point le plus haut</dt><dd>93 m</dd></div>
    <div class="row"><dt>Point le plus bas</dt><dd>48 m</dd></div>
    <div class="row"><dt>Calories</dt><dd>291 kcal</dd></div>
  </dl>
  <a class="row" href="#temps">Temps intermédiaires<svg width="45" height="62" viewBox="0 0 45 62" aria-hidden="true"><path d="M4 4L35 31L4 58" fill="none" stroke="#b0b0b0" stroke-width="12"/></svg></a>
  </div>

  <section class="chart">
    <h2>Vitesse</h2>
    <div class="frame">
      <svg class="plot" viewBox="0 0 1035 310" role="img" aria-label="Vitesse en km/h">
        <defs><marker id="dot" markerUnits="userSpaceOnUse" markerWidth="6" markerHeight="6" refX="3" refY="3"><circle cx="3" cy="3" r="3" fill="#f00"/></marker></defs>
        <path d="M118 2H1035M118 63H1035M118 125H1035M118 187H1035M118 249H1035" stroke="#000" stroke-width="3"/>
        <path d="M128 0V280M125 2H140M125 63H140M125 125H140M125 187H140M125 249H140" stroke="#fff" stroke-width="6"/>
        <g fill="#555"><circle cx="134" cy="32" r="2"/><circle cx="134" cy="93" r="2"/></g>
        <g class="tick"><text x="110" y="12">40</text><text x="110" y="74">30</text><text x="110" y="135">20</text><text x="110" y="197">10</text></g>
        <path class="speed" d="M140 249L160 190L190 160L240 140L255 105L265 96L275 87L285 91L294 91L304 91L315 94L324 108L340 150L380 140L440 125L448 113L461 112L470 110L479 114L500 122L518 116L527 113L540 113L560 130L640 140L665 125L675 108L685 99L695 58L705 86L715 130L724 125L734 93L744 107L760 122L790 125L812 113L822 111L833 114L841 112L851 99L861 96L871 98L881 96L891 101L900 103L910 102L920 109L929 104L940 107L947 113L959 111L968 108L979 107L988 106L998 140"/>
      </svg>
    </div>
  </section>
</main>

<footer class="tabs">
  <nav>
    <a href="#activite"><svg width="126" height="75" viewBox="0 0 126 75" aria-hidden="true"><g fill="none" stroke="#7f7f7f" stroke-width="3"><circle cx="25" cy="48" r="24"/><circle cx="100" cy="48" r="24"/><circle cx="57" cy="46" r="6" stroke-width="2"/><path d="M27 47L50 17L92 12M47 6L57 46L27 47M57 46L93 18M89 3L99 49M89 3H104Q104 11 97 10"/></g><path fill="#7f7f7f" d="M39 1L44 4L55 5V8L40 8Z"/></svg>Activité</a>
    <a class="active" href="#historique"><svg width="64" height="77" viewBox="0 0 64 77" aria-hidden="true"><g fill="none" stroke="#f00" stroke-width="3"><path d="M8 2H60V75H8Z"/><path stroke-width="2" d="M22 12H54M22 21H54M22 30H54M22 39H54M22 48H54M22 56H54M22 65H54"/><path stroke-width="2" d="M1 9H14M1 17H14M1 26H14M1 34H14M1 42H14M1 50H14M1 59H14M1 67H14"/></g><g fill="#f00"><circle cx="15" cy="9" r="3"/><circle cx="15" cy="17" r="3"/><circle cx="15" cy="26" r="3"/><circle cx="15" cy="34" r="3"/><circle cx="15" cy="42" r="3"/><circle cx="15" cy="50" r="3"/><circle cx="15" cy="59" r="3"/><circle cx="15" cy="67" r="3"/></g></svg>Historique</a>
    <a href="#records"><svg width="62" height="75" viewBox="0 0 62 75" aria-hidden="true"><path fill="#7f7f7f" d="M9 1H53Q53 32 44 40Q37 43 36 46V58Q49 63 49 74H15Q15 63 26 58V46Q24 43 18 40Q9 32 9 1Z"/><path d="M10 3Q2 3 2 18Q3 36 20 41M52 3Q60 3 60 18Q59 36 42 41" fill="none" stroke="#7f7f7f" stroke-width="3"/></svg>Records</a>
    <a href="#parametres"><svg width="76" height="76" viewBox="0 0 76 76" aria-hidden="true"><path fill="#7f7f7f" fill-rule="evenodd" d="M33 0H43L47 11Q50 12 53 14L63 9L69 15L65 25L67 32L76 34V43L66 46L63 52L69 61L63 67L53 63L47 66L43 76H33L30 66L23 63L13 67L7 61L11 52L9 46L0 43V34L9 30L11 24L8 14L15 8L24 12L30 10ZM38 21A17 17 0 1 0 38 55A17 17 0 1 0 38 21Z"/></svg>Paramètres</a>
    <a href="#ameliorer"><span class="full">FULL</span>Améliorer</a>
  </nav>
  <div class="home"></div>
</footer>
</body>
</html>
```
FILE: styles.css
```css
* {
  box-sizing: border-box;
}

body {
  margin: 0;
  height: 100vh;
  display: flex;
  flex-direction: column;
  background: #000;
  color: #fff;
  font-family: Inter, "Liberation Sans", sans-serif;
  font-size: 48px;
  line-height: 58px;
}

a {
  color: inherit;
  text-decoration: none;
}

button {
  margin: 0;
  border: 0;
  padding: 0;
  background: none;
  font: inherit;
}

svg {
  display: block;
  flex: none;
}

/* status and navigation bars */
.top {
  flex: none;
  background: #555;
}

.status {
  display: flex;
  justify-content: space-between;
  align-items: center;
  height: 162px;
  padding: 14px 98px 0 120px;
}

.status-left,
.status-right {
  display: flex;
  align-items: center;
  gap: 12px;
}

.status-right {
  gap: 22px;
}

.clock {
  font-size: 50px;
  font-weight: 600;
}

.battery {
  display: flex;
  align-items: center;
  gap: 2px;
}

.cell {
  width: 75px;
  height: 41px;
  border-radius: 13px;
  background: linear-gradient(90deg, #fff 23px, #aaa 23px);
  color: #555;
  font-size: 34px;
  font-weight: 700;
  line-height: 41px;
  text-align: center;
}

.nub {
  width: 5px;
  height: 14px;
  border-radius: 0 5px 5px 0;
  background: #aaa;
}

.nav {
  display: grid;
  grid-template-columns: 1fr auto 1fr;
  align-items: center;
  height: 131px;
  padding: 0 48px 0 26px;
}

.nav h1 {
  margin: 0;
  padding-left: 22px;
  font-size: 50px;
  font-weight: 600;
}

.back {
  display: flex;
  align-items: center;
  gap: 30px;
  color: #f00;
}

.edit {
  justify-self: end;
  color: #f00;
}

/* ride details */
.page {
  flex: 1;
  min-height: 0;
  overflow: hidden;
  background: #1c1c1c;
}

.details {
  padding: 24px 60px 11px;
  background: linear-gradient(#4b4b4b, #1f1f1f);
}

.map {
  position: relative;
}

.map-art {
  width: 100%;
  height: auto;
}

.area path {
  vector-effect: non-scaling-stroke;
}

.lime { fill: #bbe993; }
.leaf { fill: #b5e495; }
.green { fill: #afe588; }
.water { fill: #8fd9f5; }
.sand { fill: #ffefd0; }

.lane {
  fill: none;
  stroke: #d8dadd;
  stroke-width: 1px;
}

.lane.wide {
  stroke-width: 6px;
}

.parkway {
  fill: none;
  stroke: #d9dae0;
  stroke-width: 7px;
  stroke-linejoin: round;
}

.casing,
.artery {
  fill: none;
  stroke-linejoin: round;
}

.casing {
  stroke: #a5a9b2;
  stroke-width: 10px;
}

.artery {
  stroke: #cbced5;
  stroke-width: 8px;
}

.ride {
  fill: none;
  stroke-width: 14px;
  stroke-linecap: round;
  stroke-linejoin: round;
}

.label {
  font-weight: 600;
  stroke: #fbfbf6;
  stroke-width: 6px;
  stroke-linejoin: round;
  paint-order: stroke;
}

.river {
  font-size: 36px;
  font-weight: 500;
  fill: #4a84c8;
  stroke: #c5e6f5;
}

.museum {
  font-size: 29px;
  fill: #b8397f;
  stroke: #e3f3d8;
}

.park {
  font-family: Roboto, sans-serif;
  font-size: 31px;
  fill: #57585a;
}

.town {
  font-size: 37px;
  fill: #404142;
}

.city {
  font-size: 50px;
  font-weight: 700;
  fill: #404142;
}

.street {
  font-size: 28px;
  font-weight: 500;
  fill: #404142;
}

.shield path {
  fill: #fff;
  stroke: #404142;
  stroke-width: 4px;
}

.shield .inner {
  stroke-width: 2px;
}

.shield text {
  font-family: Roboto, sans-serif;
  font-size: 31px;
  font-weight: 700;
  text-anchor: middle;
  fill: #303132;
}

.shield .narrow {
  font-size: 28px;
}

.map-credit {
  position: absolute;
  left: 32px;
  bottom: 18px;
  display: flex;
  align-items: center;
  gap: 32px;
  opacity: .8;
}

.brand {
  display: flex;
  align-items: center;
  gap: 4px;
  color: #3f403e;
  font-size: 45px;
  font-weight: 500;
}

.legal {
  padding-top: 4px;
  color: #5c5d5c;
  font-size: 28px;
  font-weight: 500;
  line-height: 36px;
  text-decoration: underline;
  text-decoration-thickness: 3px;
  text-underline-offset: 3px;
}

.facebook {
  display: flex;
  align-items: center;
  height: 93px;
  margin: 24px 0 12px;
  padding-right: 2px;
  background: #000;
  color: #ccc;
}

.stats {
  margin: 0;
}

.row {
  display: flex;
  align-items: center;
  justify-content: space-between;
  height: 87px;
}

dd {
  display: flex;
  align-items: center;
  gap: 12px;
  margin: 0;
}

/* speed chart */
.chart {
  position: relative;
  padding: 61px 60px 0;
  background: linear-gradient(#1a1a1a, #232323 90px, #3c3c3c 190px);
}

.chart h2 {
  position: absolute;
  top: 36px;
  left: 0;
  right: 0;
  margin: 0;
  font-family: "Liberation Sans", sans-serif;
  font-size: 48px;
  font-weight: 700;
  text-align: center;
}

.frame {
  padding: 12px 12px 0;
  border-radius: 34px;
  background: #323232;
}

.plot {
  width: 100%;
  height: auto;
  border-radius: 23px;
  background: linear-gradient(#4c4c4c, #383838 120px);
}

.tick {
  font-family: "Liberation Sans", sans-serif;
  font-size: 32px;
  font-weight: 700;
  text-anchor: end;
  fill: #fff;
}

.speed {
  fill: none;
  stroke: #f00;
  stroke-width: 3px;
  marker-mid: url(#dot);
}

/* tab bar */
.tabs {
  flex: none;
  display: flex;
  flex-direction: column;
  height: 249px;
  background: #000;
}

.tabs nav {
  display: grid;
  grid-template-columns: repeat(5, 1fr);
  padding: 18px 2px 0 0;
}

.tabs a {
  display: grid;
  grid-template-rows: 78px 58px;
  place-items: center;
  color: #7f7f7f;
  font-size: 31px;
  font-weight: 500;
}

.tabs .active {
  color: #f00;
}

.full {
  padding-bottom: 24px;
  font-family: "Liberation Sans", sans-serif;
  font-size: 29px;
  font-weight: 700;
}

.home {
  width: 420px;
  height: 15px;
  margin: auto auto 24px;
  border-radius: 8px;
  background: #fff;
}
```
